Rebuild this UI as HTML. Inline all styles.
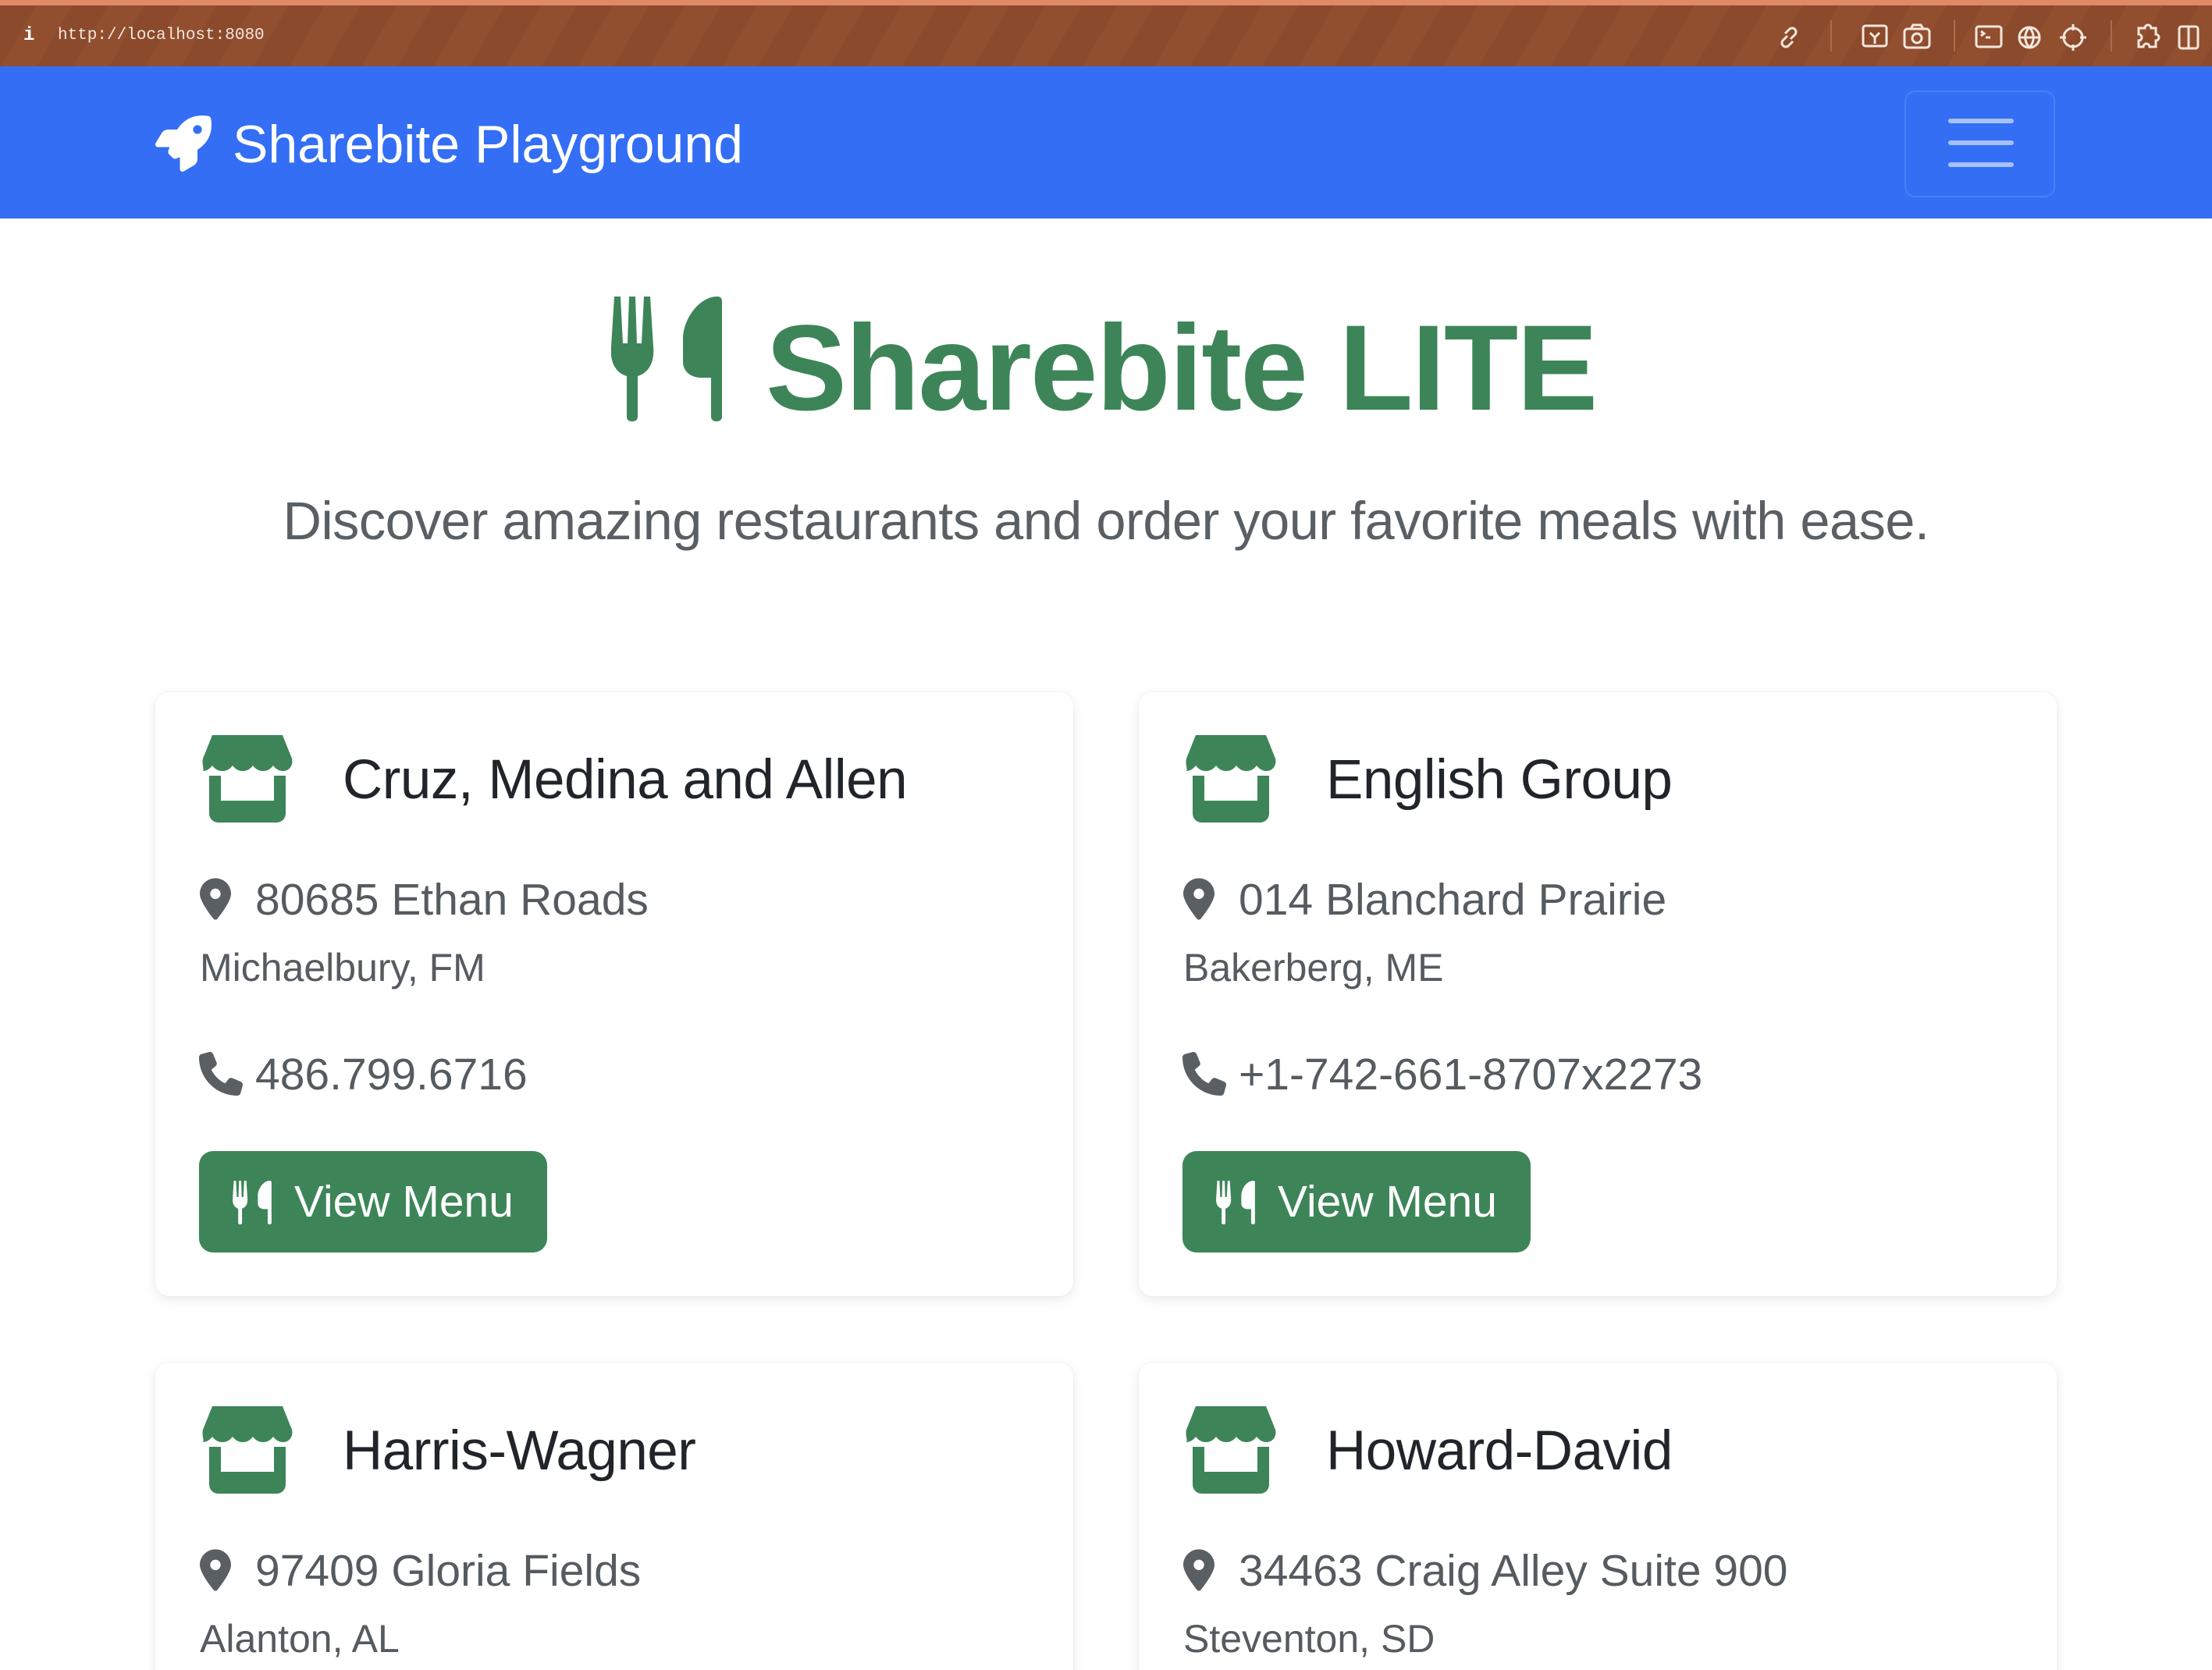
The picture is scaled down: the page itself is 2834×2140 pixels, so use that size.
<!DOCTYPE html>
<html><head><meta charset="utf-8">
<style>
*{margin:0;padding:0;box-sizing:border-box}
html,body{width:2834px;height:2140px;overflow:hidden;background:#fff;font-family:"Liberation Sans",Helvetica,Arial,sans-serif}
#wrap{position:relative;width:2834px;height:2140px;overflow:hidden}
.abs{position:absolute}
#top{left:0;top:0;width:2834px;height:85px;background:repeating-linear-gradient(120deg,#8a4a2b 0 40px,#914f30 40px 80px);border-top:7px solid #e08a66}
#url{left:74px;top:34px;font-family:"Liberation Mono",monospace;font-size:21px;color:#f5e6dc}
.sep{top:26px;width:2px;height:40px;background:#b06a48}
#nav{left:0;top:85px;width:2834px;height:195px;background:#336ef4}
.brand{left:298px;top:145px;font-size:68px;color:#fff;line-height:80px}
.tog{left:2440px;top:116px;width:193px;height:137px;border:2px solid rgba(255,255,255,.12);border-radius:14px}
.tog i{position:absolute;left:54px;width:84px;height:6px;border-radius:3px;background:#a7c1fa}
h1{position:absolute;left:981px;top:382px;font-size:156px;font-weight:700;color:#3d8558;line-height:180px;letter-spacing:-2px}
.lead{left:0;width:2834px;top:626px;text-align:center;font-size:68.5px;color:#5a5f64;line-height:84px;letter-spacing:-0.5px}
.card{width:1176px;background:#fff;border-radius:18px;box-shadow:0 4px 16px rgba(0,0,0,.09),0 0 2px rgba(0,0,0,.06)}
.name{font-size:71px;color:#212529;line-height:80px;letter-spacing:-0.5px}
.addr{font-size:57px;color:#565b60;line-height:70px}
.city{font-size:50px;color:#565b60;line-height:60px}
.btn{width:446px;height:130px;background:#3d8558;border-radius:18px;color:#fff;font-size:57px;line-height:130px;padding-left:122px}
</style></head><body><div id="wrap">
<div id="top" class="abs"></div>
<div id="url" class="abs">http://localhost:8080</div>
<div class="abs" style="left:30px;top:32px;color:#fff;font:bold 24px 'Liberation Mono',monospace">i</div>
<div class="abs sep" style="left:2345px"></div>
<div class="abs sep" style="left:2503px"></div>
<div class="abs sep" style="left:2704px"></div>
<svg class="abs" style="left:2270px;top:28px" width="570" height="40" fill="none" stroke="#f5e6dc" stroke-width="3">
<path d="M20 18l-6 6a5 5 0 0 0 7 7l6-6M24 22l6-6a5 5 0 0 0-7-7l-6 6"/>
<rect x="117" y="5" width="30" height="26" rx="3"/><path d="M126 14l6 6 6-6M132 20v8"/>
<rect x="170" y="9" width="32" height="24" rx="4"/><circle cx="186" cy="21" r="6"/><path d="M178 9l3-5h10l3 5"/>
<rect x="262" y="6" width="32" height="26" rx="3"/><path d="M268 12l4 3-4 3M274 20h6"/>
<circle cx="330" cy="20" r="13"/><path d="M317 20h26M330 7c-7 8-7 18 0 26M330 7c7 8 7 18 0 26"/>
<circle cx="386" cy="20" r="12"/><path d="M386 3v8M386 29v8M369 20h8M395 20h8"/>
<path d="M470 8h8a4 4 0 0 1 8 0h6v8a4 4 0 0 1 0 8v8h-8a4 4 0 0 0-8 0h-6v-8a4 4 0 0 0 0-8z"/>
<rect x="522" y="6" width="24" height="28" rx="3"/><path d="M534 6v28"/>
</svg>
<div id="nav" class="abs"></div>
<svg class="abs" style="left:199px;top:148px" width="72" height="72" viewBox="0 0 512 512"><path fill="#fff" d="M156.6 384.9L125.7 354c-8.5-8.5-11.5-20.8-7.7-32.2c3-8.9 7-20.5 11.8-33.8L24 288c-8.6 0-16.6-4.6-20.9-12.1s-4.2-16.700 .2-24.1l52.5-88.5c13-21.9 36.5-35.3 61.9-35.3l82.3 0c2.4-4 4.8-7.7 7.2-11.3C289.1-4.1 411.1-8.1 483.9 5.3c11.6 2.1 20.6 11.2 22.8 22.8c13.4 72.9 9.3 194.8-111.4 276.7c-3.5 2.4-7.3 4.8-11.3 7.2v82.3c0 25.4-13.4 49-35.3 61.9l-88.5 52.5c-7.4 4.4-16.6 4.5-24.1 .2s-12.1-12.2-12.1-20.9V380.8c-14.1 4.9-26.4 8.9-35.7 11.9c-11.2 3.6-23.4 .5-31.8-7.8zM384 168a40 40 0 1 0 0-80 40 40 0 1 0 0 80z"/></svg>
<div class="abs brand">Sharebite Playground</div>
<div class="abs tog"><i style="top:34px"></i><i style="top:62px"></i><i style="top:90px"></i></div>

<svg width="0" height="0" style="position:absolute"><defs>
<symbol id="ut" viewBox="0 0 142 160"><path d="M4 0h8l3 60h6l2-60h8l2 60h6l3-60h8l4 64c2 20-6 34-20 38v52c0 5-4 6-7 6s-7-1-7-6v-52c-14-4-22-18-20-38z"/><path d="M136 0c4 0 6 2 6 6v148c0 4-3 6-7 6s-7-2-7-6v-50h-12c-16 0-24-10-24-20v-30C92 30 112 0 136 0z"/></symbol>
<symbol id="store" viewBox="0 0 118 112"><path fill="#3d8558" d="M14 0h90l12 30c2 8-3 16-11 16-6 0-10-3-13-7-3 4-7 7-13 7s-10-3-13-7c-3 4-7 7-13 7s-10-3-13-7c-3 4-7 7-13 7s-10-3-13-7c-3 4-7 7-13 7C5 46 0 38 2 30z"/><path fill="#3d8558" d="M10 52h15v32h68V52h15v48c0 7-5 12-12 12H22c-7 0-12-5-12-12z"/></symbol>
<symbol id="pin" viewBox="0 0 384 512"><path fill="#5a5f64" d="M215.7 499.2C267 435 384 279.4 384 192C384 86 298 0 192 0S0 86 0 192c0 87.4 117 243 168.3 307.2c12.3 15.3 35.1 15.3 47.4 0zM192 128a64 64 0 1 1 0 128 64 64 0 1 1 0-128z"/></symbol>
<symbol id="phone" viewBox="0 0 512 512"><path fill="#5a5f64" d="M164.9 24.6c-7.7-18.6-28-28.5-47.4-23.2l-88 24C12.1 30.2 0 46 0 64C0 311.4 200.6 512 448 512c18 0 33.8-12.1 38.6-29.5l24-88c5.3-19.4-4.6-39.7-23.2-47.4l-96-40c-16.3-6.8-35.2-2.1-46.3 11.6L304.7 368C234.3 334.7 177.3 277.7 144 207.3L193.3 167c13.7-11.2 18.4-30 11.6-46.3l-40-96z"/></symbol>
</defs></svg>

<svg class="abs" style="left:783px;top:380px;fill:#3d8558" width="142" height="160"><use href="#ut"/></svg>
<h1>Sharebite LITE</h1>
<div class="abs lead">Discover amazing restaurants and order your favorite meals with ease.</div>

<!-- card 1 -->
<div class="abs card" style="left:199px;top:887px;height:774px"></div>
<svg class="abs" style="left:258px;top:942px" width="118" height="112"><use href="#store"/></svg>
<div class="abs name" style="left:439px;top:960px">Cruz, Medina and Allen</div>
<svg class="abs" style="left:256px;top:1124px" width="40" height="56"><use href="#pin"/></svg>
<div class="abs addr" style="left:327px;top:1118px">80685 Ethan Roads</div>
<div class="abs city" style="left:256px;top:1210px">Michaelbury, FM</div>
<svg class="abs" style="left:255px;top:1348px" width="56" height="56"><use href="#phone"/></svg>
<div class="abs addr" style="left:327px;top:1342px">486.799.6716</div>
<div class="abs btn" style="left:255px;top:1475px">View Menu</div>
<svg class="abs" style="left:298px;top:1513px;fill:#fff" width="50" height="56"><use href="#ut"/></svg>

<!-- card 2 -->
<div class="abs card" style="left:1459px;top:887px;height:774px"></div>
<svg class="abs" style="left:1518px;top:942px" width="118" height="112"><use href="#store"/></svg>
<div class="abs name" style="left:1699px;top:960px">English Group</div>
<svg class="abs" style="left:1516px;top:1124px" width="40" height="56"><use href="#pin"/></svg>
<div class="abs addr" style="left:1587px;top:1118px">014 Blanchard Prairie</div>
<div class="abs city" style="left:1516px;top:1210px">Bakerberg, ME</div>
<svg class="abs" style="left:1515px;top:1348px" width="56" height="56"><use href="#phone"/></svg>
<div class="abs addr" style="left:1587px;top:1342px">+1-742-661-8707x2273</div>
<div class="abs btn" style="left:1515px;top:1475px">View Menu</div>
<svg class="abs" style="left:1558px;top:1513px;fill:#fff" width="50" height="56"><use href="#ut"/></svg>

<!-- card 3 -->
<div class="abs card" style="left:199px;top:1746px;height:420px"></div>
<svg class="abs" style="left:258px;top:1802px" width="118" height="112"><use href="#store"/></svg>
<div class="abs name" style="left:439px;top:1820px">Harris-Wagner</div>
<svg class="abs" style="left:256px;top:1984px" width="40" height="56"><use href="#pin"/></svg>
<div class="abs addr" style="left:327px;top:1978px">97409 Gloria Fields</div>
<div class="abs city" style="left:256px;top:2070px">Alanton, AL</div>

<!-- card 4 -->
<div class="abs card" style="left:1459px;top:1746px;height:420px"></div>
<svg class="abs" style="left:1518px;top:1802px" width="118" height="112"><use href="#store"/></svg>
<div class="abs name" style="left:1699px;top:1820px">Howard-David</div>
<svg class="abs" style="left:1516px;top:1984px" width="40" height="56"><use href="#pin"/></svg>
<div class="abs addr" style="left:1587px;top:1978px">34463 Craig Alley Suite 900</div>
<div class="abs city" style="left:1516px;top:2070px">Steventon, SD</div>
</div></body></html>
